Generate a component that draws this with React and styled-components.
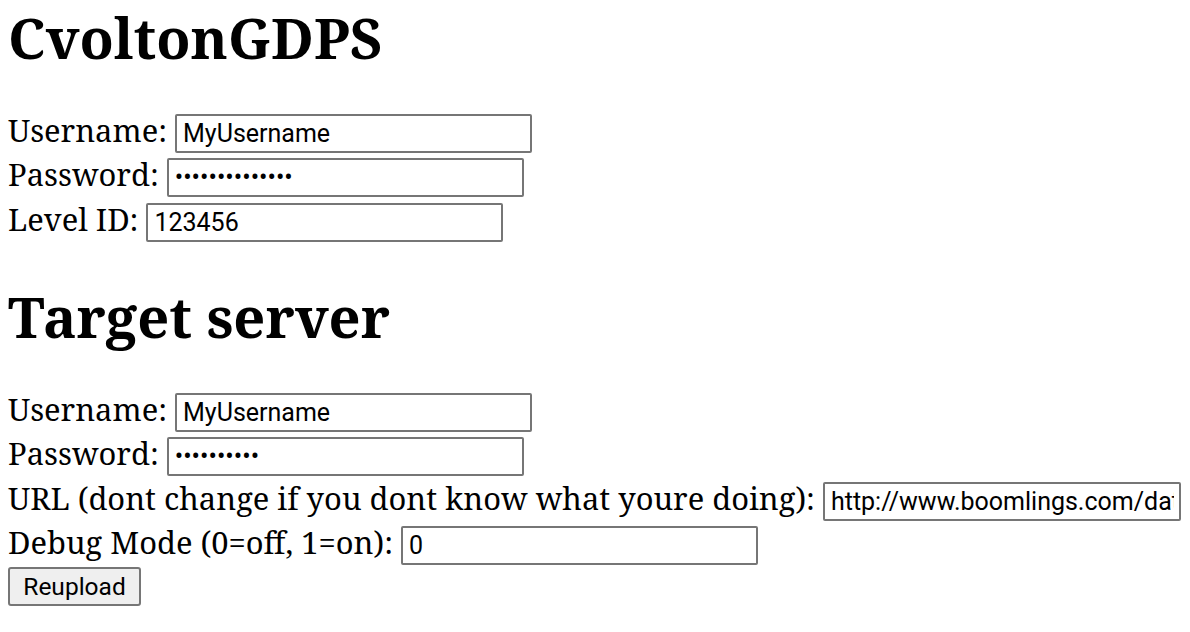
import React from "react";
import styled, { createGlobalStyle } from "styled-components";

const GlobalStyle = createGlobalStyle`
  html, body {
    margin: 0;
    padding: 0;
    background: #ffffff;
  }
  body {
    font-family: "Noto Serif", "DejaVu Serif", serif;
    color: #000000;
  }
`;

const Page = styled.div`
  padding: 0 8px;
`;

const Heading = styled.h1`
  font-size: 56px;
  font-weight: 700;
  line-height: 76px;
  margin: ${({ first }) => (first ? "-1.5px 0 34.5px" : "35.6px 0 34px")};
`;

const Row = styled.div`
  display: flex;
  align-items: baseline;
  height: 44.4px;
  white-space: nowrap;
`;

const Label = styled.span`
  font-size: 30.9px;
  line-height: normal;
  margin-right: 8px;
`;

const Field = styled.input`
  box-sizing: border-box;
  flex: none;
  width: ${({ w }) => w || 357}px;
  height: 39px;
  padding: 1px 5px 1px 6px;
  border: 2px solid #767676;
  border-radius: 2px;
  font-family: Roboto, "Noto Sans", sans-serif;
  font-size: 25px;
  color: #000000;
  background: #ffffff;
  outline: none;
`;

const Button = styled.button`
  display: block;
  box-sizing: border-box;
  margin-top: 2px;
  width: 133px;
  height: 39px;
  padding: 0;
  border: 2px solid #767676;
  border-radius: 3px;
  background: #efefef;
  font-family: Roboto, "Noto Sans", sans-serif;
  font-size: 24.5px;
  color: #000000;
`;

const FormRow = ({ label, type = "text", value, w }) => (
  <Row>
    <Label>{label}</Label>
    <Field type={type} value={value} w={w} readOnly />
  </Row>
);

export default function App() {
  return (
    <Page>
      <GlobalStyle />
      <Heading first>CvoltonGDPS</Heading>
      <FormRow label="Username:" value="MyUsername" />
      <FormRow label="Password:" type="password" value="••••••••••••••" />
      <FormRow label="Level ID:" value="123456" />
      <Heading>Target server</Heading>
      <FormRow label="Username:" value="MyUsername" />
      <FormRow label="Password:" type="password" value="••••••••••" />
      <FormRow
        label="URL (dont change if you dont know what youre doing):"
        value="http://www.boomlings.com/database/"
        w={358}
      />
      <FormRow label="Debug Mode (0=off, 1=on):" value="0" />
      <Button>Reupload</Button>
    </Page>
  );
}
